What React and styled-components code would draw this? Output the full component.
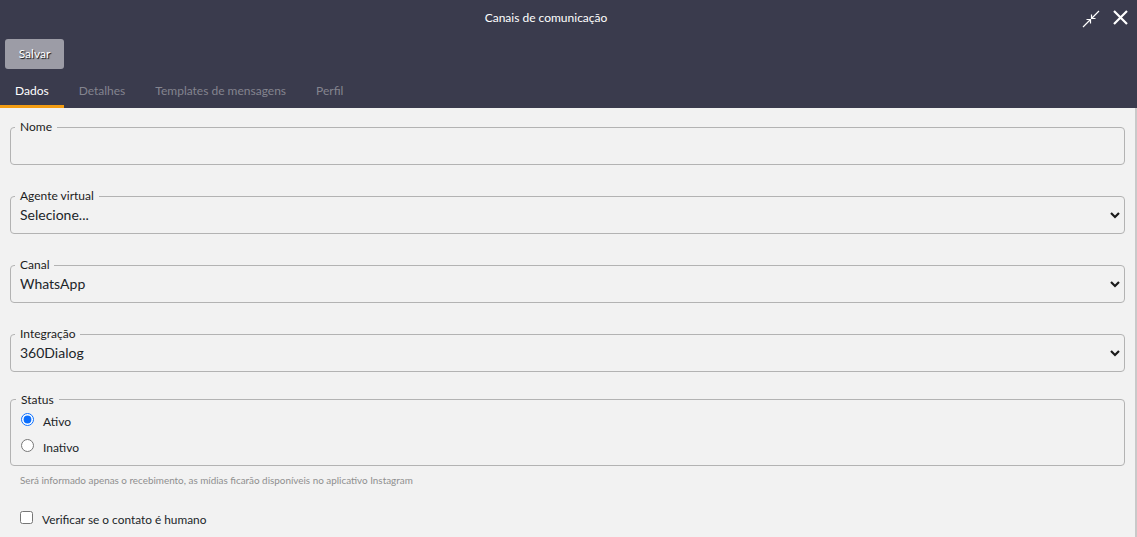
import React from "react";
import styled, { createGlobalStyle } from "styled-components";

const GlobalStyle = createGlobalStyle`
  html, body {
    margin: 0;
    padding: 0;
    height: 537px;
    overflow: hidden;
    background: #f2f2f2;
    font-family: Lato, "Noto Sans", sans-serif;
  }
`;

const Page = styled.div`
  width: 1137px;
  height: 537px;
  display: flex;
  flex-direction: column;
  overflow: hidden;
`;

const Header = styled.header`
  background: #3a3b4d;
  height: 108px;
  flex: none;
  display: flex;
  flex-direction: column;
`;

const TitleBar = styled.div`
  height: 39px;
  flex: none;
  display: flex;
  align-items: center;
  justify-content: center;
  position: relative;
  padding: 0 45px 4px 0;
  box-sizing: border-box;
`;

const Title = styled.h1`
  margin: 0;
  color: #fff;
  font-size: 12px;
  font-weight: 400;
`;

const WindowActions = styled.div`
  position: absolute;
  top: 10px;
  right: 9px;
  display: flex;
  align-items: flex-start;
  gap: 13px;
`;

const IconButton = styled.button`
  border: 0;
  background: none;
  padding: 0;
  display: flex;
  color: #fff;
`;

const Toolbar = styled.div`
  height: 30px;
  flex: none;
  padding-left: 5px;
  display: flex;
`;

const SaveButton = styled.button`
  width: 59px;
  height: 30px;
  border: 0;
  border-radius: 3px;
  background: #9c9ca6;
  color: #fff;
  font-family: inherit;
  font-size: 12px;
  padding: 0 0 2px;
  text-shadow: 1px 1px 1px rgba(0, 0, 0, 0.9);
`;

const Tabs = styled.nav`
  margin-top: 5px;
  height: 34px;
  display: flex;
`;

const Tab = styled.a`
  box-sizing: border-box;
  height: 34px;
  padding: 2px 15px 0;
  display: flex;
  align-items: center;
  font-size: 12px;
  color: ${(props) => (props.$active ? "#fff" : "#84848f")};
  border-bottom: 3px solid ${(props) => (props.$active ? "#f39c12" : "transparent")};
`;

const Content = styled.main`
  flex: 1;
  box-sizing: border-box;
  padding: 13px 10px 0;
  border-right: 2px solid #c9c9c9;
  display: flex;
  flex-direction: column;
`;

const Field = styled.fieldset`
  box-sizing: border-box;
  width: 1115px;
  margin: ${(props) => props.$top || 0}px 0 ${(props) => props.$gap || 25}px;
  padding: 0 4px;
  height: ${(props) => props.$height || 44}px;
  border: 1px solid #b3b3b3;
  border-radius: 4px;
  min-width: 0;
`;

const Legend = styled.legend`
  padding: 0 5px;
  margin-left: ${(props) => props.$indent || 0}px;
  font-size: 12px;
  line-height: ${(props) => props.$leading || 12}px;
  color: #1c1c1c;
  height: 12px;
`;

const SelectBox = styled.div`
  position: relative;
  margin-top: -6px;
`;

const Select = styled.select`
  display: block;
  width: 100%;
  height: 36px;
  border: 0;
  outline: 0;
  appearance: none;
  background: transparent;
  font-family: inherit;
  font-size: 14px;
  color: #212529;
  padding: 0 0 0 5px;
`;

const Chevron = styled.svg`
  position: absolute;
  right: 0;
  top: 16px;
  pointer-events: none;
`;

const RadioGroup = styled.div`
  margin: 3px 0 0 5px;
`;

const RadioRow = styled.label`
  display: flex;
  align-items: center;
  height: 26px;
  font-size: 12px;
  color: #212529;
`;

const Radio = styled.input`
  width: 13px;
  height: 13px;
  margin: 0 9px 0 1px;
  position: relative;
  top: -2px;
  accent-color: #0b6efd;
`;

const HelpText = styled.p`
  margin: 0 0 0 10px;
  height: 13px;
  line-height: 13px;
  font-size: 9.9px;
  color: #8f8f8f;
`;

const CheckRow = styled.label`
  margin: 25px 0 0 10px;
  display: flex;
  align-items: center;
  font-size: 11.85px;
  color: #212529;
`;

const Check = styled.input`
  width: 13px;
  height: 13px;
  margin: 0 9px 0 0;
  position: relative;
  top: -2px;
`;

const CollapseIcon = () => (
  <svg width="18" height="18" viewBox="0 0 18 18" fill="none" stroke="currentColor" strokeWidth="1.2">
    <path d="M17 1 10 8M9.5 4.5V8.5H13.5" />
    <path d="M1 17l7-7M4.5 9.5H8.5V13.5" />
  </svg>
);

const CloseIcon = () => (
  <svg width="15" height="15" viewBox="0 0 15 15" fill="none" stroke="currentColor" strokeWidth="2.2">
    <path d="M1 1l13 13M14 1 1 14" />
  </svg>
);

const SelectField = ({ label, value, options }) => (
  <Field>
    <Legend>{label}</Legend>
    <SelectBox>
      <Select defaultValue={value}>
        {options.map((option) => (
          <option key={option}>{option}</option>
        ))}
      </Select>
      <Chevron width="10" height="7" viewBox="0 0 10 7" fill="none" stroke="#1a1a1a" strokeWidth="2.2">
        <path d="M1 1l4 4 4-4" />
      </Chevron>
    </SelectBox>
  </Field>
);

const App = () => {
  return (
    <Page>
      <GlobalStyle />
      <Header>
        <TitleBar>
          <Title>Canais de comunicação</Title>
          <WindowActions>
            <IconButton aria-label="Recolher">
              <CollapseIcon />
            </IconButton>
            <IconButton aria-label="Fechar">
              <CloseIcon />
            </IconButton>
          </WindowActions>
        </TitleBar>
        <Toolbar>
          <SaveButton>Salvar</SaveButton>
        </Toolbar>
        <Tabs>
          <Tab $active>Dados</Tab>
          <Tab>Detalhes</Tab>
          <Tab>Templates de mensagens</Tab>
          <Tab>Perfil</Tab>
        </Tabs>
      </Header>
      <Content>
        <Field>
          <Legend>Nome</Legend>
        </Field>
        <SelectField label="Agente virtual" value="Selecione..." options={["Selecione..."]} />
        <SelectField label="Canal" value="WhatsApp" options={["WhatsApp"]} />
        <SelectField label="Integração" value="360Dialog" options={["360Dialog"]} />
        <Field $height={73} $gap={8} $top={-4}>
          <Legend $indent={1} $leading={14}>Status</Legend>
          <RadioGroup>
            <RadioRow>
              <Radio type="radio" name="status" defaultChecked />
              Ativo
            </RadioRow>
            <RadioRow>
              <Radio type="radio" name="status" />
              Inativo
            </RadioRow>
          </RadioGroup>
        </Field>
        <HelpText>Será informado apenas o recebimento, as mídias ficarão disponíveis no aplicativo Instagram</HelpText>
        <CheckRow>
          <Check type="checkbox" />
          Verificar se o contato é humano
        </CheckRow>
      </Content>
    </Page>
  );
};

export default App;
